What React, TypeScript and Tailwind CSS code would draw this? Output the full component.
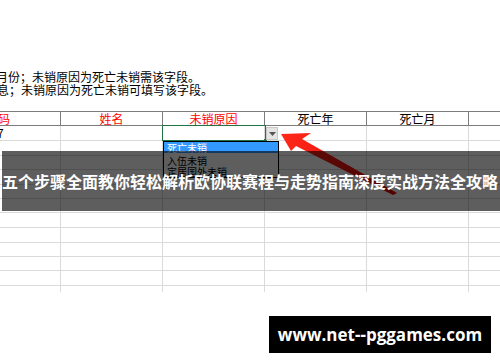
import React from "react";

const widths = [61, 102, 102, 102, 102];
const rowHeights = [15, 15, 14, 15, 14, 14, 15, 15, 14, 14, 15];

function DataRow({ h, first, last }: { h: number; first?: boolean; last?: boolean }) {
  return (
    <div
      className={`flex ${last ? "" : "border-b border-[#dadada]"}`}
      style={{ height: h }}
    >
      {widths.map((w, i) => (
        <div
          key={i}
          className="border-r border-[#dadada] text-[12px] leading-[14px] text-black overflow-hidden whitespace-nowrap"
          style={{ width: w }}
        >
          {first && i === 0 ? <span className="ml-[-3px]">7</span> : null}
        </div>
      ))}
      <div className="flex-1" />
    </div>
  );
}

export default function App() {
  return (
    <div
      className="relative w-[500px] h-[362px] overflow-hidden bg-white"
      style={{ fontFamily: '"Noto Sans CJK SC", "Noto Sans", sans-serif' }}
    >
      <div className="pt-[70px]">
        <div className="text-[12px] leading-[13px] text-black whitespace-nowrap">
          <div className="ml-[-4px]">月份；未销原因为死亡未销需该字段。</div>
          <div className="ml-[-3px]">息；未销原因为死亡未销可填写该字段。</div>
        </div>

        <div className="mt-[15px]">
          <div className="flex h-[15px] border-t border-b border-[#7c7c7c]">
            <div className="w-[61px] border-r border-[#7c7c7c] text-[12px] leading-[13px] text-[#ff0000] overflow-hidden whitespace-nowrap">
              <span className="ml-[-2px]">码</span>
            </div>
            <div className="w-[102px] border-r border-[#7c7c7c] text-[12px] leading-[13px] text-[#ff0000] text-center">
              姓名
            </div>
            <div className="w-[102px] border-r border-[#7c7c7c] text-[12px] leading-[13px] text-[#ff0000] text-center">
              未销原因
            </div>
            <div className="w-[102px] border-r border-[#7c7c7c] text-[12px] leading-[13px] text-black text-center">
              死亡年
            </div>
            <div className="w-[102px] border-r border-[#7c7c7c] text-[12px] leading-[13px] text-black text-center">
              死亡月
            </div>
            <div className="flex-1" />
          </div>
          {rowHeights.map((h, i) => (
            <DataRow key={i} h={h} first={i === 0} />
          ))}
          <DataRow h={6} last />
        </div>
      </div>

      <div className="absolute left-[162px] top-[125px] w-[104px] h-[16px] border border-[#217346]" />
      <div className="absolute left-[264px] top-[139px] w-[3px] h-[3px] bg-[#217346]" />

      <div className="absolute left-[266px] top-[127px] w-[12px] h-[13px] bg-[#e4e4e4] border border-[#c8c8c8] flex items-center justify-center">
        <svg width="7" height="4" viewBox="0 0 7 4">
          <polygon points="0,0 7,0 3.5,4" fill="#555" />
        </svg>
      </div>

      <div className="absolute left-[163px] top-[141px] w-[116px] h-[37px] bg-white border border-black text-[10px] whitespace-nowrap">
        <div className="h-[11px] bg-[#3399ff] text-white pl-[3px] flex items-center leading-[10px]">死亡未销</div>
        <div className="h-[11px] text-black pl-[3px] mt-[2px] flex items-center leading-[10px]">入伍未销</div>
        <div className="h-[11px] text-black pl-[3px] flex items-center leading-[10px]">定居国外未销</div>
      </div>

      <svg className="absolute left-0 top-0" width="500" height="362" viewBox="0 0 500 362">
        <defs>
          <linearGradient id="ag" x1="281" y1="134" x2="396" y2="194" gradientUnits="userSpaceOnUse">
            <stop offset="0" stopColor="#ff2a1a" />
            <stop offset="1" stopColor="#e00000" />
          </linearGradient>
        </defs>
        <polygon
          points="281,134 311,133 302,139 397,193 393,195 296,146 291,151"
          fill="url(#ag)"
        />
      </svg>

      <div className="absolute left-[2px] right-0 top-[151px] h-[60px] bg-[rgba(0,0,0,0.63)] flex items-center">
        <div className="text-white font-bold text-[16px] leading-[20px] whitespace-nowrap">
          五个步骤全面教你轻松解析欧协联赛程与走势指南深度实战方法全攻略
        </div>
      </div>

      <div className="absolute left-[269px] top-[316px] w-[222px] h-[37px] bg-black flex items-center justify-center">
        <span
          className="text-white font-bold text-[17px] leading-[20px]"
          style={{ fontFamily: '"Open Sans", sans-serif' }}
        >
          www.net--pggames.com
        </span>
      </div>
    </div>
  );
}
